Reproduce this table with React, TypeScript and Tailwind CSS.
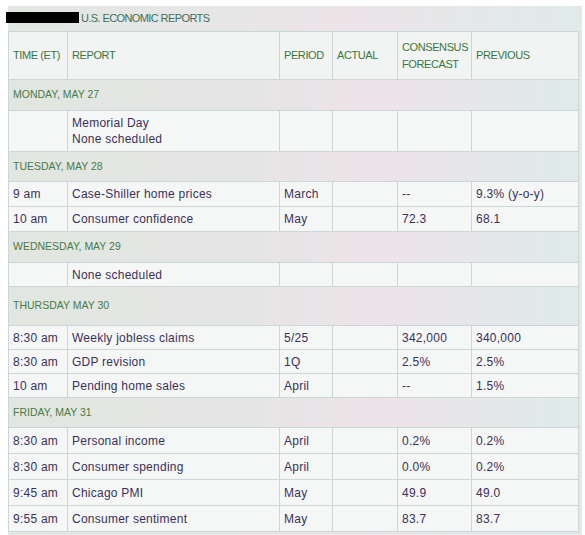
const cols = [59, 212, 53, 65, 74, 107];

type Row =
  | { day: string; h: number }
  | { cells: string[]; h: number };

const rows: Row[] = [
  { day: "MONDAY, MAY 27", h: 31 },
  { cells: ["", "Memorial Day\nNone scheduled", "", "", "", ""], h: 41 },
  { day: "TUESDAY, MAY 28", h: 30 },
  { cells: ["9 am", "Case-Shiller home prices", "March", "", "--", "9.3% (y-o-y)"], h: 25 },
  { cells: ["10 am", "Consumer confidence", "May", "", "72.3", "68.1"], h: 25 },
  { day: "WEDNESDAY, MAY 29", h: 31 },
  { cells: ["", "None scheduled", "", "", "", ""], h: 24 },
  { day: "THURSDAY MAY 30", h: 39 },
  { cells: ["8:30 am", "Weekly jobless claims", "5/25", "", "342,000", "340,000"], h: 24 },
  { cells: ["8:30 am", "GDP revision", "1Q", "", "2.5%", "2.5%"], h: 24 },
  { cells: ["10 am", "Pending home sales", "April", "", "--", "1.5%"], h: 24 },
  { day: "FRIDAY, MAY 31", h: 30 },
  { cells: ["8:30 am", "Personal income", "April", "", "0.2%", "0.2%"], h: 26 },
  { cells: ["8:30 am", "Consumer spending", "April", "", "0.0%", "0.2%"], h: 26 },
  { cells: ["9:45 am", "Chicago PMI", "May", "", "49.9", "49.0"], h: 26 },
  { cells: ["9:55 am", "Consumer sentiment", "May", "", "83.7", "83.7"], h: 26 },
];

const headers = ["TIME (ET)", "REPORT", "PERIOD", "ACTUAL", "CONSENSUS\nFORECAST", "PREVIOUS"];

export default function App() {
  return (
    <div className="min-h-[535px] bg-white pt-[6px] pl-[8px] font-['Liberation_Sans',Arial,sans-serif]">
      <div className="w-[574px] bg-[linear-gradient(90deg,#e2e7e1_0%,#e6e6e6_35%,#ebe4e8_60%,#e0ebe9_100%)] pb-[4px]">
        <div className="flex h-[25px] items-center">
          <span className="-ml-[2px] mt-[-2px] h-[11px] w-[73px] bg-black" />
          <span className="ml-[2px] text-[11px] tracking-[-0.6px] text-[#3f6f5c]">
            U.S. ECONOMIC REPORTS
          </span>
        </div>
        <table className="w-[570px] table-fixed border-collapse">
          <colgroup>
            {cols.map((w, i) => (
              <col key={i} style={{ width: w }} />
            ))}
          </colgroup>
          <tbody>
            <tr>
              {headers.map((h, i) => (
                <td
                  key={i}
                  className="h-[48px] whitespace-pre border border-[#cbd6d9] bg-[#f1f4f2] px-[4px] align-middle text-[11px] leading-[16.5px] tracking-[-0.4px] text-[#3b7440]"
                >
                  {h}
                </td>
              ))}
            </tr>
            {rows.map((r, i) =>
              "day" in r ? (
                <tr key={i}>
                  <td
                    colSpan={6}
                    style={{ height: r.h }}
                    className="border border-[#cbd6d9] bg-[linear-gradient(90deg,#e1e6e0_0%,#e5e5e5_40%,#ece3e8_65%,#dfebea_100%)] px-[4px] align-middle text-[10.5px] text-[#4a7a45]"
                  >
                    {r.day}
                  </td>
                </tr>
              ) : (
                <tr key={i}>
                  {r.cells.map((c, j) => (
                    <td
                      key={j}
                      style={{ height: r.h }}
                      className="whitespace-pre-line border border-[#cbd6d9] bg-[#f4f7f6] px-[4px] align-middle text-[12px] leading-[16px] tracking-[0.25px] text-[#3b305c]"
                    >
                      {c}
                    </td>
                  ))}
                </tr>
              )
            )}
          </tbody>
        </table>
      </div>
    </div>
  );
}
